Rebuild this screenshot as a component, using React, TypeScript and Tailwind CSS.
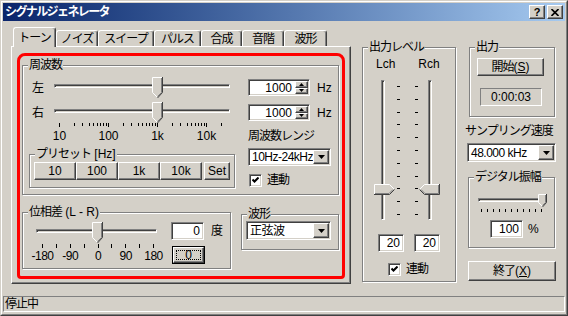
import React from "react";

// classic win2000 bevels
const raised =
  "border border-t-white border-l-white border-r-[#404040] border-b-[#404040] shadow-[inset_-1px_-1px_0_#808080] bg-[#D4D0C8]";
const sunken =
  "border border-t-[#808080] border-l-[#808080] border-r-white border-b-white shadow-[inset_1px_1px_0_#404040,inset_-1px_-1px_0_#D4D0C8]";

const TABS = [
  { label: "トーン", cls: "w-[43px]" },
  { label: "ノイズ", cls: "w-[42px]" },
  { label: "スイープ", cls: "w-[56px]" },
  { label: "パルス", cls: "w-[47px]" },
  { label: "合成", cls: "w-[41px]" },
  { label: "音階", cls: "w-[42px]" },
  { label: "波形", cls: "w-[43px]" },
];

const LOG_TICKS = [
  10, 20, 30, 40, 50, 60, 70, 80, 90, 100, 200, 300, 400, 500, 600, 700, 800, 900, 1000, 2000, 3000,
  4000, 5000, 6000, 7000, 8000, 9000, 10000, 20000,
];
const LOG_LABELS = [
  { f: 10, t: "10" },
  { f: 100, t: "100" },
  { f: 1000, t: "1k" },
  { f: 10000, t: "10k" },
];
const PHASE_LABELS = ["-180", "-90", "0", "90", "180"];

// japanese text: the dialog font sets kana a bit tighter than Noto
function J({ children }: { children: React.ReactNode }) {
  return <span className="tracking-[-1px]">{children}</span>;
}

function Group({
  label,
  className = "",
  children,
}: {
  label: React.ReactNode;
  className?: string;
  children?: React.ReactNode;
}) {
  return (
    <div
      className={`relative shrink-0 border border-[#808080] shadow-[1px_1px_0_#fff,inset_1px_1px_0_#fff] ${className}`}
    >
      <span className="absolute left-[5px] top-[-8px] bg-[#D4D0C8] px-[1px] leading-[14px] whitespace-nowrap">
        {label}
      </span>
      {children}
    </div>
  );
}

function Btn({ children, className = "" }: { children: React.ReactNode; className?: string }) {
  return <div className={`${raised} shrink-0 flex items-center justify-center ${className}`}>{children}</div>;
}

function Edit({ value, className = "" }: { value: string; className?: string }) {
  return (
    <div className={`${sunken} shrink-0 bg-white flex items-center justify-end p-[1px] pr-[3px] ${className}`}>
      {value}
    </div>
  );
}

function SpinEdit({ value, className = "" }: { value: string; className?: string }) {
  return (
    <div className={`${sunken} shrink-0 bg-white flex p-[1px] ${className}`}>
      <div className="flex-1 flex items-center justify-end pr-[3px]">{value}</div>
      <div className="w-[13px] flex flex-col">
        <div className={`flex-1 ${raised} flex items-center justify-center`}>
          <svg width="5" height="3" viewBox="0 0 5 3">
            <path d="M0 3L2.5 0L5 3z" fill="#000" />
          </svg>
        </div>
        <div className={`flex-1 ${raised} flex items-center justify-center`}>
          <svg width="5" height="3" viewBox="0 0 5 3">
            <path d="M0 0L2.5 3L5 0z" fill="#000" />
          </svg>
        </div>
      </div>
    </div>
  );
}

function Combo({ value, className = "" }: { value: string; className?: string }) {
  return (
    <div className={`${sunken} shrink-0 bg-white flex p-[1px] ${className}`}>
      <div className="flex-1 flex items-center pl-[2px] whitespace-nowrap overflow-hidden tracking-[-0.5px]">
        {value}
      </div>
      <div className={`w-[16px] ${raised} flex items-center justify-center`}>
        <svg width="7" height="4" viewBox="0 0 7 4">
          <path d="M0 0H7L3.5 4z" fill="#000" />
        </svg>
      </div>
    </div>
  );
}

function Check() {
  return (
    <div className={`w-[13px] h-[13px] shrink-0 ${sunken} bg-white flex items-center justify-center`}>
      <svg width="7" height="7" viewBox="0 0 7 7">
        <path d="M0.5 2.5L2.5 4.5L6.5 0.5" stroke="#000" strokeWidth="2" fill="none" />
      </svg>
    </div>
  );
}

function ThumbDown({ w = 11, h = 21 }: { w?: number; h?: number }) {
  const tip = Math.floor(w / 2);
  const body = h - 1 - tip;
  const mid = w / 2;
  return (
    <svg width={w} height={h} viewBox={`0 0 ${w} ${h}`}>
      <polygon points={`0,0 ${w},0 ${w},${body + 0.5} ${mid},${h} 0,${body + 0.5}`} fill="#D4D0C8" />
      <path d={`M0.5 ${body + 0.5}V0.5H${w - 1}`} stroke="#fff" fill="none" />
      <path d={`M0.5 ${body + 0.5}L${mid} ${h - 0.5}`} stroke="#fff" fill="none" />
      <path d={`M${w - 0.5} 0V${body + 0.5}L${mid} ${h}`} stroke="#404040" fill="none" />
      <path d={`M${w - 1.5} 1V${body + 0.5}L${mid} ${h - 1.5}`} stroke="#808080" fill="none" />
    </svg>
  );
}

function ThumbRight() {
  return (
    <svg width="21" height="11" viewBox="0 0 21 11">
      <polygon points="0,0 15.5,0 20.5,5.5 15.5,11 0,11" fill="#D4D0C8" />
      <path d="M0.5 10V0.5H15.5L20 5" stroke="#fff" fill="none" />
      <path d="M0 10.5H15.5L20.5 5.5" stroke="#404040" fill="none" />
      <path d="M1 9.5H15L19 5.5" stroke="#808080" fill="none" />
    </svg>
  );
}

function ThumbLeft() {
  return (
    <svg width="21" height="11" viewBox="0 0 21 11">
      <polygon points="5.5,0 21,0 21,11 5.5,11 0.5,5.5" fill="#D4D0C8" />
      <path d="M0.5 5.5L5.5 0.5H20" stroke="#fff" fill="none" />
      <path d="M20.5 0V10.5H5.5L0.5 5.5" stroke="#404040" fill="none" />
      <path d="M19.5 1V9.5H6L2 5.5" stroke="#808080" fill="none" />
    </svg>
  );
}

function HSlider({ className = "", thumbClass }: { className?: string; thumbClass: string }) {
  return (
    <div className={`relative shrink-0 h-[21px] ${className}`}>
      <div className={`mt-[7px] h-[4px] ${sunken}`} />
      <div className={`absolute top-0 ${thumbClass}`}>
        <ThumbDown />
      </div>
    </div>
  );
}

function FreqRow({ label, className = "" }: { label: string; className?: string }) {
  return (
    <div className={`flex items-center h-[21px] ${className}`}>
      <span className="ml-[9px] w-[22px]">{label}</span>
      <HSlider className="w-[176px]" thumbClass="left-[98px]" />
      <SpinEdit value="1000" className="ml-[18px] w-[62px] h-[17px]" />
      <span className="ml-[7px]">Hz</span>
    </div>
  );
}

function LogScale() {
  return (
    <div className="relative ml-[31px] w-[176px] h-[20px] shrink-0">
      {LOG_TICKS.map((f) => {
        const x = Math.round(5 + 49 * Math.log10(f / 10));
        const major = f === 10 || f === 100 || f === 1000 || f === 10000;
        return (
          <div
            key={f}
            className={`absolute top-0 w-[1px] bg-black ${major ? "h-[4px]" : "h-[3px]"}`}
            style={{ left: x }}
          />
        );
      })}
      {LOG_LABELS.map((l) => (
        <span
          key={l.t}
          className="absolute top-[6px] -translate-x-1/2"
          style={{ left: 5.5 + 49 * Math.log10(l.f / 10) }}
        >
          {l.t}
        </span>
      ))}
    </div>
  );
}

function PhaseScale() {
  return (
    <div className="relative ml-[13px] w-[121px] h-[21px] shrink-0">
      {Array.from({ length: 9 }).map((_, i) => (
        <div
          key={i}
          className="absolute top-[1px] w-[1px] h-[4px] bg-black"
          style={{ left: Math.round(6 + i * 13.875) }}
        />
      ))}
      {PHASE_LABELS.map((t, i) => (
        <span
          key={t}
          className="absolute top-[6px] -translate-x-1/2 tracking-[-0.5px]"
          style={{ left: 6.5 + i * 27.75 }}
        >
          {t}
        </span>
      ))}
    </div>
  );
}

function TitleBar() {
  return (
    <div className="h-[18px] shrink-0 flex items-center bg-linear-to-r from-[#0A246A] to-[#A6CAF0] px-[2px]">
      <span className="flex-1 text-white font-bold text-[12px] tracking-[-1.6px]">シグナルジェネレータ</span>
      <div className={`w-[16px] h-[14px] ${raised} flex items-center justify-center font-bold text-[11px] leading-none`}>
        ?
      </div>
      <div className={`ml-[2px] w-[16px] h-[14px] ${raised} flex items-center justify-center`}>
        <svg width="8" height="7" viewBox="0 0 8 7">
          <path d="M0.5 0L7.5 7M7.5 0L0.5 7" stroke="#000" strokeWidth="1.6" />
        </svg>
      </div>
    </div>
  );
}

function ToneTabs() {
  return (
    <div className="ml-[8px] mt-[6px] w-[340px] shrink-0 flex flex-col">
      {/* tab strip */}
      <div className="relative z-10 h-[19px] flex items-end pl-[2px]">
        {TABS.map((t, i) => (
          <div
            key={t.label}
            className={`${t.cls} shrink-0 flex items-center justify-center tracking-[-1px] bg-[#D4D0C8] rounded-t-[3px] border-t border-l border-r border-t-white border-l-white border-r-[#404040] shadow-[inset_-1px_0_0_#808080] ${
              i === 0 ? "h-[20px] -mb-[1px]" : "h-[16px]"
            }`}
          >
            {t.label}
          </div>
        ))}
      </div>

      {/* panel */}
      <div className="h-[238px] border border-t-white border-l-white border-r-[#404040] border-b-[#404040] shadow-[inset_-1px_-1px_0_#808080]">
        <div className="ml-[5px] mt-[6px] w-[328px] h-[226px] border-[3px] border-[#FF0000] rounded-t-[8px] rounded-b-[4px] flex flex-col">
          <Group label={<J>周波数</J>} className="ml-[2px] mt-[9px] w-[317px] h-[130px] flex flex-col">
            <FreqRow label="左" className="mt-[11px]" />
            <FreqRow label="右" className="mt-[4px]" />
            <div className="flex">
              <div className="w-[212px] flex flex-col">
                <LogScale />
                <Group
                  label={
                    <>
                      <J>プリセット</J> [Hz]
                    </>
                  }
                  className="ml-[6px] mt-[11px] w-[206px] h-[34px]"
                >
                  <div className="flex mt-[7px] ml-[4px]">
                    <Btn className="w-[42px] h-[18px]">10</Btn>
                    <Btn className="w-[42px] h-[18px]">100</Btn>
                    <Btn className="w-[42px] h-[18px]">1k</Btn>
                    <Btn className="w-[42px] h-[18px]">10k</Btn>
                    <Btn className="ml-[2px] w-[26px] h-[18px]">Set</Btn>
                  </div>
                </Group>
              </div>
              <div className="ml-[13px] flex flex-col">
                <span className="mt-[6px] tracking-[-1px]">周波数レンジ</span>
                <Combo value="10Hz-24kHz" className="mt-[5px] w-[83px] h-[18px]" />
                <div className="mt-[7px] ml-[1px] flex items-center">
                  <Check />
                  <span className="ml-[5px] tracking-[-1px]">連動</span>
                </div>
              </div>
            </div>
          </Group>

          <div className="flex items-start mt-[17px]">
            <Group
              label={
                <>
                  <J>位相差</J> (L - R)
                </>
              }
              className="ml-[2px] w-[209px] h-[57px] flex flex-col"
            >
              <div className="flex items-start mt-[9px] h-[21px]">
                <HSlider className="ml-[13px] w-[121px]" thumbClass="left-[56px]" />
                <Edit value="0" className="ml-[14px] w-[33px] h-[18px]" />
                <span className="ml-[7px] mt-[2px]">度</span>
              </div>
              <div className="flex items-start">
                <PhaseScale />
                <div className="ml-[15px] mt-[3px] w-[33px] h-[18px] shrink-0 border border-black">
                  <div className={`${raised} h-full p-[2px]`}>
                    <div className="h-full border border-dotted border-black flex items-center justify-center leading-none">
                      0
                    </div>
                  </div>
                </div>
              </div>
            </Group>
            <Group label={<J>波形</J>} className="ml-[10px] mt-[2px] w-[98px] h-[36px]">
              <Combo value="正弦波" className="ml-[4px] mt-[6px] w-[85px] h-[19px]" />
            </Group>
          </div>
        </div>
      </div>
    </div>
  );
}

function OutputLevel() {
  return (
    <Group label={<J>出力レベル</J>} className="ml-[11px] mt-[26px] w-[94px] h-[235px] flex flex-col">
      <div className="flex mt-[9px]">
        <span className="ml-[13px]">Lch</span>
        <span className="ml-[23px]">Rch</span>
      </div>
      <div className="flex mt-[9px] h-[140px]">
        <div className={`relative ml-[18px] w-[4px] h-full ${sunken}`}>
          <div className="absolute left-[-8px] top-[103px]">
            <ThumbRight />
          </div>
        </div>
        <div className="ml-[12px] w-[3px] h-full flex flex-col justify-between pt-[6px] pb-[5px]">
          {Array.from({ length: 11 }).map((_, i) => (
            <div key={i} className="h-[1px] bg-black" />
          ))}
        </div>
        <div className="ml-[15px] w-[3px] h-full flex flex-col justify-between pt-[6px] pb-[5px]">
          {Array.from({ length: 11 }).map((_, i) => (
            <div key={i} className="h-[1px] bg-black" />
          ))}
        </div>
        <div className={`relative ml-[10px] w-[4px] h-full ${sunken}`}>
          <div className="absolute left-[-10px] top-[103px]">
            <ThumbLeft />
          </div>
        </div>
      </div>
      <div className="flex mt-[14px]">
        <Edit value="20" className="ml-[15px] w-[26px] h-[18px]" />
        <Edit value="20" className="ml-[10px] w-[26px] h-[18px]" />
      </div>
      <div className="flex items-center mt-[10px] ml-[25px]">
        <Check />
        <span className="ml-[5px] tracking-[-1px]">連動</span>
      </div>
    </Group>
  );
}

function RightColumn() {
  return (
    <div className="ml-[9px] mt-[26px] w-[91px] shrink-0 flex flex-col">
      <Group label={<J>出力</J>} className="ml-[4px] w-[86px] h-[70px] flex flex-col">
        <Btn className="mt-[10px] ml-[7px] w-[67px] h-[18px]">
          <J>開始</J>(<span className="underline">S</span>)
        </Btn>
        <div className="mt-[12px] ml-[10px] w-[62px] h-[18px] border border-t-[#808080] border-l-[#808080] border-r-white border-b-white flex items-center justify-center">
          0:00:03
        </div>
      </Group>
      <span className="mt-[7px] tracking-[-1px] whitespace-nowrap">サンプリング速度</span>
      <Combo value="48.000 kHz" className="mt-[5px] ml-[2px] w-[89px] h-[19px]" />
      <Group label={<J>デジタル振幅</J>} className="mt-[15px] ml-[3px] w-[87px] h-[71px] flex flex-col">
        <div className="relative ml-[9px] mt-[16px] w-[66px] h-[13px]">
          <div className={`mt-[4px] h-[4px] ${sunken}`} />
          <div className="absolute top-0 left-[60px]">
            <ThumbDown w={9} h={13} />
          </div>
        </div>
        <div className="ml-[12px] mt-[2px] w-[61px] h-[3px] flex justify-between">
          {Array.from({ length: 11 }).map((_, i) => (
            <div key={i} className="w-[1px] h-full bg-black" />
          ))}
        </div>
        <div className="flex items-center mt-[8px] ml-[21px]">
          <Edit value="100" className="w-[33px] h-[18px]" />
          <span className="ml-[5px]">%</span>
        </div>
      </Group>
      <Btn className="mt-[13px] ml-[3px] w-[88px] h-[20px]">
        <J>終了</J>(<span className="underline">X</span>)
      </Btn>
    </div>
  );
}

function StatusBar() {
  return (
    <div className="h-[16px] shrink-0 flex items-center pl-[1px] border border-t-[#808080] border-l-[#808080] border-r-white border-b-white">
      <span className="tracking-[-1px]">停止中</span>
    </div>
  );
}

export default function App() {
  return (
    <div className="w-[568px] h-[316px] overflow-hidden bg-[#D4D0C8] border border-t-[#D4D0C8] border-l-[#D4D0C8] border-r-[#404040] border-b-[#404040] font-['Liberation_Sans','Noto_Sans_CJK_JP',sans-serif] text-[12px] leading-[14px] text-black">
      <div className="h-full flex flex-col p-[1px] border border-t-white border-l-white border-r-[#808080] border-b-[#808080]">
        <TitleBar />
        <div className="h-[275px] shrink-0 flex items-start">
          <ToneTabs />
          <OutputLevel />
          <RightColumn />
        </div>
        <StatusBar />
      </div>
    </div>
  );
}
